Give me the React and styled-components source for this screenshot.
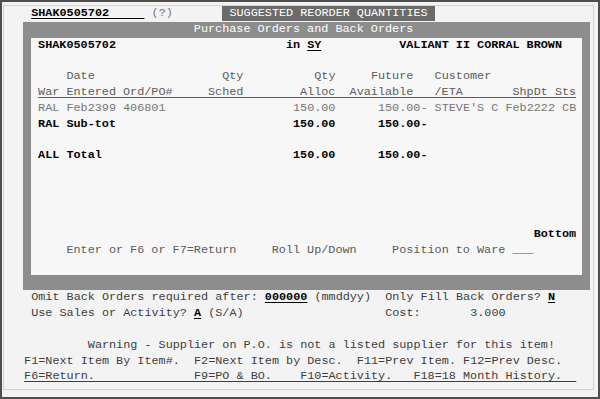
import React from 'react';
import styled, { createGlobalStyle } from 'styled-components';

const RH = 15.8;

const tones = {
  hi: '#050505',
  norm: '#3e3e3e',
  soft: '#5c5c5c',
  faint: '#767676',
  white: '#ffffff',
};

const Global = createGlobalStyle`
  html, body { margin: 0; padding: 0; background: #f3f3f3; }
  #root { width: 600px; height: 399px; }
`;

const Frame = styled.div`
  box-sizing: border-box;
  width: 600px;
  height: 399px;
  border: 2px solid #4f4f4f;
  background: #f3f3f3;
  padding: 3px 4px 7px 1px;
`;

const Screen = styled.div`
  box-sizing: border-box;
  height: 100%;
  border: 1px solid #d3d3d3;
  padding-left: 13px;
  font-family: "Liberation Mono", "DejaVu Sans Mono", monospace;
  font-size: 11.8px;
  display: flex;
  flex-direction: column;
`;

const Line = styled.div`
  height: ${RH}px;
  line-height: ${RH}px;
  white-space: pre;
  color: ${(p) => tones[p.$tone || 'norm']};
`;

const Seg = styled.span`
  color: ${(p) => tones[p.$tone || 'norm']};
  font-weight: ${(p) => (p.$tone === 'hi' ? 700 : 400)};
  text-decoration: ${(p) => (p.$u ? 'underline' : 'none')};
  text-decoration-thickness: 1px;
  text-underline-offset: 2px;
`;

const TitleBar = styled.span`
  display: inline-block;
  vertical-align: top;
  height: 15px;
  line-height: 15px;
  background: #6b6b6b;
  color: #ffffff;
`;

const Window = styled.div`
  box-sizing: border-box;
  width: 567px;
  margin-left: 6px;
  background: #8d8d8d;
  padding: 0 8px ${RH}px;
`;

const WindowTitle = styled(Line)`
  color: #ffffff;
`;

const WindowBody = styled.div`
  background: #f7f7f7;
  display: flex;
  flex-direction: column;
`;

function compose(start, segs) {
  let out = '';
  let cur = start;
  segs.forEach(([col, text]) => {
    out += ' '.repeat(Math.max(0, col - cur)) + text;
    cur = col + text.length;
  });
  return out;
}

function Row({ start = 0, segs = [], tone }) {
  let cur = start;
  const parts = [];
  segs.forEach((s, i) => {
    const gap = Math.max(0, s.col - cur);
    if (gap) parts.push(' '.repeat(gap));
    parts.push(
      <Seg key={i} $tone={s.tone || tone} $u={s.u}>
        {s.text}
      </Seg>
    );
    cur = s.col + s.text.length;
  });
  return <Line $tone={tone}>{parts.length ? parts : ' '}</Line>;
}

const headerText = compose(3, [
  [3, 'War'],
  [7, 'Entered'],
  [15, 'Ord/PO#'],
  [27, 'Sched'],
  [40, 'Alloc'],
  [47, 'Available'],
  [59, '/ETA'],
  [70, 'ShpDt'],
  [76, 'Sts'],
]);

const fkeyText =
  compose(1, [
    [1, 'F6=Return.'],
    [25, 'F9=PO & BO.'],
    [40, 'F10=Activity.'],
    [56, 'F18=18 Month History.'],
  ]) + '  ';

export default function App() {
  return (
    <>
      <Global />
      <Frame>
        <Screen>
          <Line>
            {'  '}
            <Seg $tone="hi" $u>
              {'SHAK0505702     '}
            </Seg>
            {' '}
            <Seg $tone="faint">(?)</Seg>
            {'       '}
            <TitleBar>{' SUGGESTED REORDER QUANTITIES '}</TitleBar>
          </Line>

          <Window>
            <WindowTitle $tone="white">
              {' '.repeat(23)}Purchase Orders and Back Orders
            </WindowTitle>
            <WindowBody>
              <Row
                start={2}
                tone="hi"
                segs={[
                  { col: 3, text: 'SHAK0505702' },
                  { col: 38, text: 'in' },
                  { col: 41, text: 'SY', u: true },
                  { col: 54, text: 'VALIANT II CORRAL BROWN' },
                ]}
              />
              <Row />
              <Row
                start={2}
                tone="soft"
                segs={[
                  { col: 7, text: 'Date' },
                  { col: 29, text: 'Qty' },
                  { col: 42, text: 'Qty' },
                  { col: 50, text: 'Future' },
                  { col: 59, text: 'Customer' },
                ]}
              />
              <Row start={2} tone="soft" segs={[{ col: 3, text: headerText, u: true }]} />
              <Row
                start={2}
                tone="faint"
                segs={[
                  { col: 3, text: 'RAL Feb2399 406801' },
                  { col: 39, text: '150.00' },
                  { col: 51, text: '150.00-' },
                  { col: 59, text: "STEVE'S C" },
                  { col: 69, text: 'Feb2222' },
                  { col: 77, text: 'CB' },
                ]}
              />
              <Row
                start={2}
                tone="hi"
                segs={[
                  { col: 3, text: 'RAL Sub-tot' },
                  { col: 39, text: '150.00' },
                  { col: 51, text: '150.00-' },
                ]}
              />
              <Row />
              <Row
                start={2}
                tone="hi"
                segs={[
                  { col: 3, text: 'ALL Total' },
                  { col: 39, text: '150.00' },
                  { col: 51, text: '150.00-' },
                ]}
              />
              <Row />
              <Row />
              <Row />
              <Row />
              <Row start={2} tone="hi" segs={[{ col: 73, text: 'Bottom' }]} />
              <Row
                start={2}
                tone="soft"
                segs={[
                  { col: 7, text: 'Enter or F6 or F7=Return' },
                  { col: 36, text: 'Roll Up/Down' },
                  { col: 53, text: 'Position to Ware' },
                  { col: 70, text: '___' },
                ]}
              />
              <Row />
            </WindowBody>
          </Window>

          <Row
            tone="norm"
            segs={[
              { col: 2, text: 'Omit Back Orders required after:' },
              { col: 35, text: '000000', tone: 'hi', u: true },
              { col: 42, text: '(mmddyy)' },
              { col: 52, text: 'Only Fill Back Orders?' },
              { col: 75, text: 'N', tone: 'hi', u: true },
            ]}
          />
          <Row
            tone="norm"
            segs={[
              { col: 2, text: 'Use Sales or Activity?' },
              { col: 25, text: 'A', tone: 'hi', u: true },
              { col: 27, text: '(S/A)' },
              { col: 52, text: 'Cost:' },
              { col: 64, text: '3.000' },
            ]}
          />
          <Row />
          <Row
            tone="norm"
            segs={[
              {
                col: 10,
                text: 'Warning - Supplier on P.O. is not a listed supplier for this item!',
              },
            ]}
          />
          <Row
            tone="norm"
            segs={[
              { col: 1, text: 'F1=Next Item By Item#.' },
              { col: 25, text: 'F2=Next Item by Desc.' },
              { col: 48, text: 'F11=Prev Item.' },
              { col: 63, text: 'F12=Prev Desc.' },
            ]}
          />
          <Row tone="norm" segs={[{ col: 1, text: fkeyText, u: true }]} />
        </Screen>
      </Frame>
    </>
  );
}
